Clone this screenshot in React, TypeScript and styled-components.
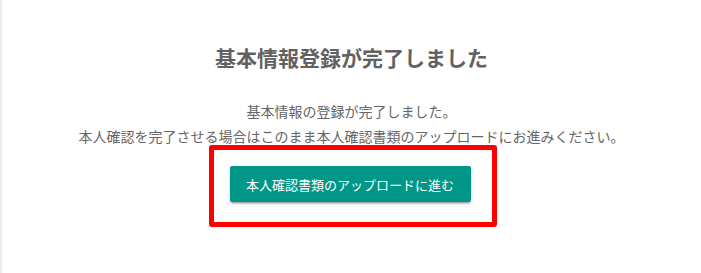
import React from 'react';
import styled, { createGlobalStyle } from 'styled-components';

const GlobalStyle = createGlobalStyle`
  html, body {
    margin: 0;
    padding: 0;
    background: #fff;
  }
  body {
    font-family: "Noto Sans CJK JP", "Noto Sans", sans-serif;
  }
`;

const SPage = styled.div`
  box-sizing: border-box;
  height: 273px;
  border-left: 2px solid #ededed;
  padding-top: 42px;
  display: flex;
  flex-direction: column;
  align-items: center;
`;

const STitle = styled.h2`
  margin: 0;
  font-size: 21px;
  line-height: 30px;
  font-weight: 700;
  color: #616161;
`;

const SMessage = styled.div`
  margin-top: 27px;
  text-align: center;
`;

const SLine = styled.p`
  margin: 0;
  font-size: 14px;
  line-height: 25px;
  color: #666;
`;

const SHighlight = styled.div`
  margin-top: -4px;
  margin-left: 2px;
  padding: 16px 21px 20px 16px;
  border: 5px solid #ff0000;
  border-radius: 3px;
`;

const SButton = styled.button`
  display: block;
  width: 241px;
  height: 36px;
  padding: 0;
  border: none;
  border-radius: 2px;
  background: #009688;
  color: #fff;
  font-family: "Noto Sans CJK JP", "Noto Sans", sans-serif;
  font-size: 13px;
  font-weight: 400;
  cursor: pointer;
  box-shadow: 0 2px 2px rgba(0, 0, 0, 0.14), 0 3px 1px -2px rgba(0, 0, 0, 0.2),
    0 1px 5px rgba(0, 0, 0, 0.12);
`;

const App = () => {
  return (
    <>
      <GlobalStyle />
      <SPage>
        <STitle>基本情報登録が完了しました</STitle>
        <SMessage>
          <SLine>基本情報の登録が完了しました。</SLine>
          <SLine>本人確認を完了させる場合はこのまま本人確認書類のアップロードにお進みください。</SLine>
        </SMessage>
        <SHighlight>
          <SButton>本人確認書類のアップロードに進む</SButton>
        </SHighlight>
      </SPage>
    </>
  );
};

export default App;
